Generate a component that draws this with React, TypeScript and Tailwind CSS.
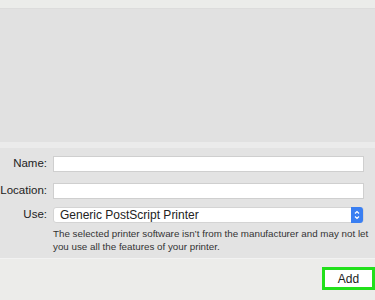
export default function App() {
  return (
    <div className="w-[375px] h-[300px] overflow-hidden bg-[#e3e3e3] font-['Liberation_Sans',Arial,sans-serif] text-[#222] flex flex-col">
      <div className="h-[9px] bg-[#ebecea] border-b border-[#dcdcdc]" />
      <div className="h-[133px] bg-[#e1e1e1]" />
      <div className="h-[6px] bg-[#ebebeb]" />
      <div className="flex flex-col pt-[8px]">
        <div className="flex items-center h-[16px]">
          <span className="w-[47px] text-right text-[11.5px]">Name:</span>
          <div className="ml-[6px] w-[311px] h-[16px] bg-white border border-[#cfcfcf]" />
        </div>
        <div className="flex items-center h-[16px] mt-[11px]">
          <span className="w-[47px] text-right text-[11.5px] whitespace-nowrap">Location:</span>
          <div className="ml-[6px] w-[311px] h-[16px] bg-white border border-[#cfcfcf]" />
        </div>
        <div className="flex items-center h-[16px] mt-[8px]">
          <span className="w-[47px] text-right text-[11.5px]">Use:</span>
          <div className="ml-[6px] w-[311px] h-[16px] bg-white border border-[#d4d4d4] rounded-[3px] flex items-center">
            <span className="flex-1 pl-[6px] text-[12px] leading-none">Generic PostScript Printer</span>
            <div className="w-[12px] h-[16px] bg-[#3a7ff2] rounded-r-[3px] flex items-center justify-center">
              <svg width="8" height="12" viewBox="0 0 8 12" fill="none" stroke="white" strokeWidth="1.2">
                <path d="M2 4.5 L4 2.5 L6 4.5" />
                <path d="M2 7.5 L4 9.5 L6 7.5" />
              </svg>
            </div>
          </div>
        </div>
        <p className="ml-[53px] mt-[5px] text-[9.8px] leading-[12.5px] text-[#333] w-[316px]">
          The selected printer software isn’t from the manufacturer and may not let you use all the features of your printer.
        </p>
      </div>
      <div className="mt-[5px] flex-1 bg-[#ececea] border-t border-[#f2f2f2] flex justify-end items-start pt-[8px]">
        <div className="w-[53px] h-[23px] border-[3px] border-[#22e01b] bg-white flex items-center justify-center text-[12px]">
          Add
        </div>
      </div>
    </div>
  );
}
